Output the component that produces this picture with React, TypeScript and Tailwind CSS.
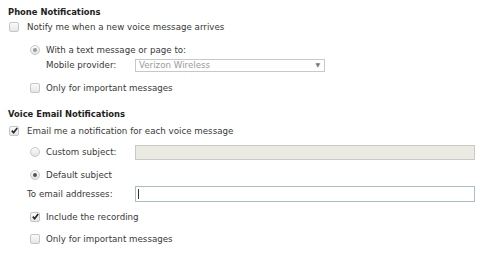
import React from "react";

const Box: React.FC<{ checked?: boolean }> = ({ checked }) => (
  <span className="relative inline-block w-[10px] h-[10px] shrink-0 rounded-[2px] border border-[#c6c6c6] bg-gradient-to-b from-[#fafafa] to-[#e6e6e6]">
    {checked && (
      <svg viewBox="0 0 10 10" className="absolute left-[0px] top-[-1px] w-[9px] h-[9px]">
        <path d="M2 5.2 L4 7.4 L8 2.2" fill="none" stroke="#2a2a2a" strokeWidth="1.9" />
      </svg>
    )}
  </span>
);

const Radio: React.FC<{ on?: boolean; dim?: boolean }> = ({ on, dim }) => (
  <span className="relative inline-flex items-center justify-center w-[10px] h-[10px] shrink-0 rounded-full border border-[#c8c8c8] bg-gradient-to-b from-[#fbfbfb] to-[#e4e4e4]">
    {on && <span className={`w-[4px] h-[4px] rounded-full ${dim ? "bg-[#9a9a9a]" : "bg-[#555]"}`} />}
  </span>
);

const Label: React.FC<{ children: React.ReactNode }> = ({ children }) => (
  <span className="leading-none">{children}</span>
);

const App: React.FC = () => {
  return (
    <div className="w-[503px] h-[260px] bg-white text-[#383838] text-[8.7px] pl-[8px] pt-[5px] overflow-hidden" style={{ fontFamily: '"DejaVu Sans", Verdana, sans-serif' }}>
      {/* Phone section */}
      <div className="h-[14px] flex items-center font-bold text-[#222] text-[8.4px]">Phone Notifications</div>
      <div className="h-[16px] flex items-center gap-[8px] pl-[1px]">
        <Box />
        <Label>Notify me when a new voice message arrives</Label>
      </div>

      <div className="pl-[22px]">
        <div className="mt-[7px] h-[16px] flex items-center gap-[6px]">
          <Radio on dim />
          <Label>With a text message or page to:</Label>
        </div>
        <div className="h-[14px] flex items-center pl-[16px]">
          <span className="w-[89px] leading-none">Mobile provider:</span>
          <div className="w-[190px] h-[13px] flex items-center justify-between border border-[#c8c8c8] bg-white pl-[3px] pr-[4px] text-[#9a9a9a]">
            <span className="leading-none">Verizon Wireless</span>
            <span className="text-[6px] text-[#777] leading-none">▼</span>
          </div>
        </div>
        <div className="mt-[8px] h-[16px] flex items-center gap-[6px]">
          <Box />
          <Label>Only for important messages</Label>
        </div>
      </div>

      {/* Voice email section */}
      <div className="mt-[11px] h-[14px] flex items-center font-bold text-[#222] text-[8.4px]">Voice Email Notifications</div>
      <div className="mt-[2px] h-[16px] flex items-center gap-[8px] pl-[1px]">
        <Box checked />
        <Label>Email me a notification for each voice message</Label>
      </div>

      <div className="pl-[22px]">
        <div className="mt-[5px] h-[16px] flex items-center">
          <span className="flex items-center gap-[6px] w-[105px]">
            <Radio />
            <Label>Custom subject:</Label>
          </span>
          <div className="w-[340px] h-[15px] border border-[#c9c9c6] bg-[#ebebe4]" />
        </div>
        <div className="mt-[7px] h-[16px] flex items-center gap-[6px]">
          <Radio on />
          <Label>Default subject</Label>
        </div>
      </div>

      <div className="mt-[3px] h-[16px] flex items-center pl-[19px]">
        <span className="w-[108px] leading-none">To email addresses:</span>
        <div className="w-[340px] h-[16px] flex items-center border border-[#a9bbd0] bg-white pl-[2px]">
          <span className="w-[1px] h-[10px] bg-[#333]" />
        </div>
      </div>

      <div className="pl-[22px]">
        <div className="mt-[7px] h-[16px] flex items-center gap-[6px]">
          <Box checked />
          <Label>Include the recording</Label>
        </div>
        <div className="mt-[6px] h-[16px] flex items-center gap-[6px]">
          <Box />
          <Label>Only for important messages</Label>
        </div>
      </div>
    </div>
  );
};

export default App;
